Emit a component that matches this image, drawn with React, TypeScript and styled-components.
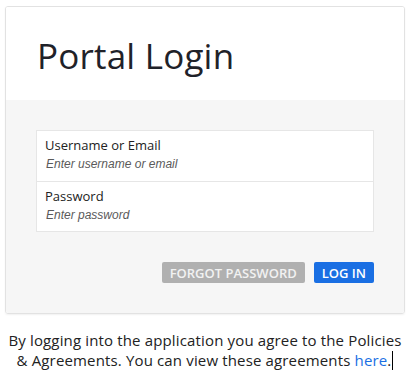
import React from "react";
import styled, { createGlobalStyle } from "styled-components";

const Global = createGlobalStyle`
  html, body { margin: 0; padding: 0; background: #ffffff; }
  body { font-family: "Open Sans", "Liberation Sans", sans-serif; color: #222; }
`;

const Page = styled.div`
  padding: 6px 4px 0 5px;
  width: 400px;
`;

const Card = styled.div`
  border: 1px solid #e2e2e2;
  border-radius: 3px;
  overflow: hidden;
  box-shadow: 0 1px 2px rgba(0, 0, 0, 0.06);
`;

const Header = styled.div`
  background: #ffffff;
  height: 93px;
  display: flex;
  align-items: center;
  padding: 0 31px;
  box-sizing: border-box;
`;

const Title = styled.h1`
  margin: 0;
  font-size: 35px;
  font-weight: 400;
  color: #1f2229;
  letter-spacing: 0.2px;
  padding-top: 4px;
`;

const Body = styled.div`
  background: #f6f6f6;
  padding: 30px;
  display: flex;
  flex-direction: column;
  gap: 30px;
`;

const FieldBox = styled.div`
  background: #ffffff;
  border: 1px solid #e6e6e6;
  display: flex;
  flex-direction: column;
`;

const Field = styled.div<{ $divider?: boolean }>`
  height: 50px;
  box-sizing: border-box;
  padding: 6px 8px 0 8px;
  border-top: ${(p) => (p.$divider ? "1px solid #e6e6e6" : "none")};
  display: flex;
  flex-direction: column;
`;

const Label = styled.label`
  font-size: 13px;
  line-height: 17px;
  color: #222;
`;

const Input = styled.input`
  border: none;
  outline: none;
  padding: 0 0 0 1px;
  margin-top: 2px;
  font-family: "Liberation Sans", Arial, sans-serif;
  font-size: 12px;
  line-height: 16px;
  background: transparent;
  &::placeholder {
    font-style: italic;
    color: #5a5a5a;
  }
`;

const Actions = styled.div`
  display: flex;
  justify-content: flex-end;
  gap: 9px;
`;

const Button = styled.button<{ $variant: "muted" | "primary" }>`
  height: 21px;
  border: none;
  border-radius: 2px;
  padding: 0 8px;
  font-family: "Open Sans", sans-serif;
  font-size: 13px;
  font-weight: 600;
  text-transform: uppercase;
  color: ${(p) => (p.$variant === "primary" ? "#ffffff" : "#f2f2f2")};
  background: ${(p) => (p.$variant === "primary" ? "#1a6fe3" : "#b0b0b0")};
  cursor: pointer;
`;

const Notice = styled.p`
  margin: 16px 0 0 0;
  text-align: center;
  font-size: 15px;
  letter-spacing: 0.15px;
  line-height: 20px;
  color: #222;
`;

const Link = styled.a`
  color: #1a6fe3;
  text-decoration: none;
`;

const Caret = styled.span`
  display: inline-block;
  width: 0;
  height: 19px;
  margin-left: 1px;
  border-left: 1px solid #000;
  vertical-align: -4px;
`;

export default function App() {
  return (
    <>
      <Global />
      <Page>
        <Card>
          <Header>
            <Title>Portal Login</Title>
          </Header>
          <Body>
            <FieldBox>
              <Field>
                <Label>Username or Email</Label>
                <Input placeholder="Enter username or email" />
              </Field>
              <Field $divider>
                <Label>Password</Label>
                <Input type="password" placeholder="Enter password" />
              </Field>
            </FieldBox>
            <Actions>
              <Button $variant="muted">Forgot Password</Button>
              <Button $variant="primary">Log In</Button>
            </Actions>
          </Body>
        </Card>
        <Notice>
          By logging into the application you agree to the Policies &amp; Agreements. You can view these
          agreements <Link href="#">here</Link>.<Caret />
        </Notice>
      </Page>
    </>
  );
}
